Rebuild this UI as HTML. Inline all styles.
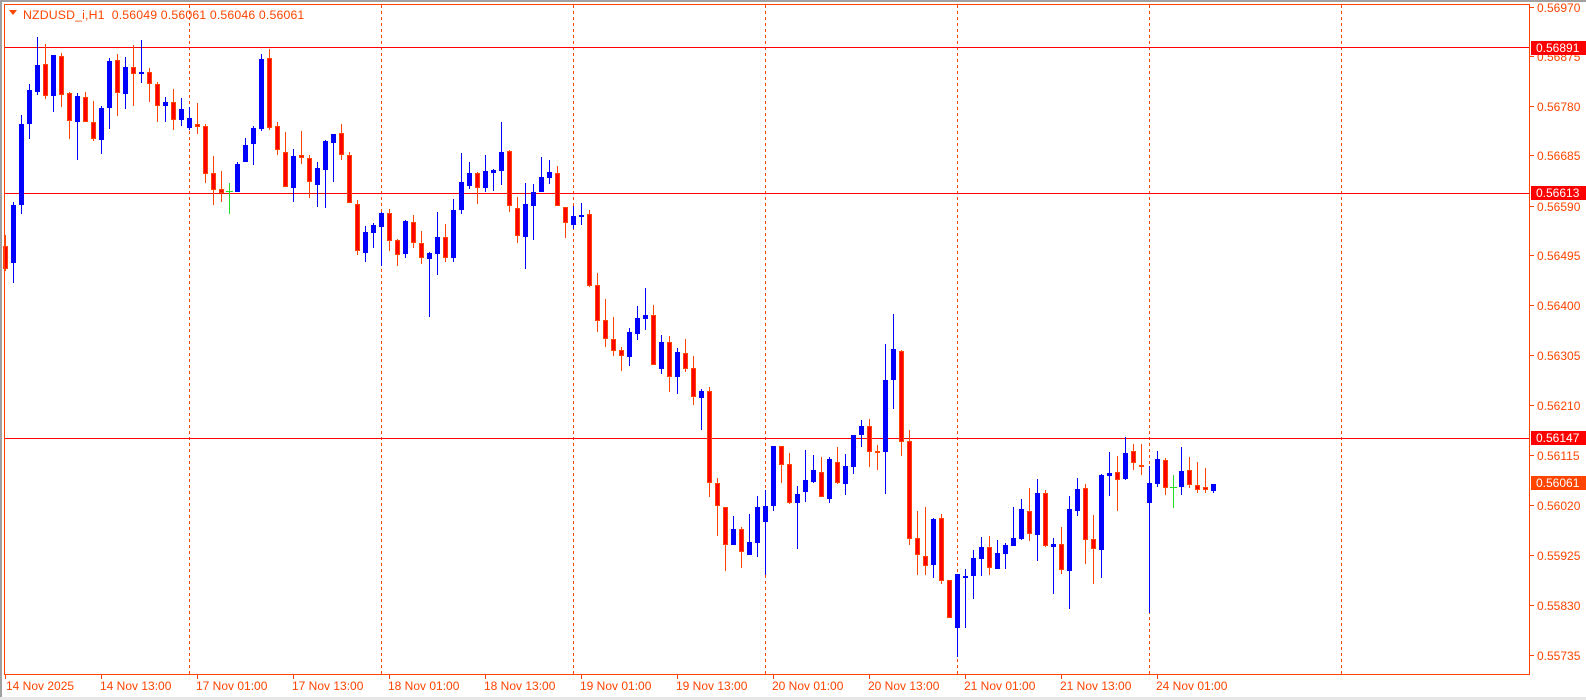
<!DOCTYPE html>
<html><head><meta charset="utf-8"><style>
html,body{margin:0;padding:0;background:#fff;width:1586px;height:700px;overflow:hidden}
svg{display:block}
text{font-family:"Liberation Sans",sans-serif;font-size:12px}
#title{white-space:pre;font-size:12.3px;letter-spacing:0.15px}
</style></head><body>
<svg id="s" width="1586" height="700" xmlns="http://www.w3.org/2000/svg">
<rect x="0" y="0" width="1586" height="700" fill="#fff"/>
<rect x="0" y="0" width="1586" height="2" fill="#a0a0a0"/>
<rect x="0" y="0" width="2" height="700" fill="#a0a0a0"/>
<rect x="0" y="697" width="1586" height="3" fill="#e6e6e6"/>
<g id="grid"></g>
<line x1="4" y1="47.5" x2="1529" y2="47.5" stroke="#ff0000"/>
<line x1="4" y1="193.5" x2="1529" y2="193.5" stroke="#ff0000"/>
<line x1="4" y1="438.5" x2="1529" y2="438.5" stroke="#ff0000"/>
<g id="c"></g>
<rect x="4.5" y="4.5" width="1525" height="670" fill="none" stroke="#ff4500"/>
<g id="ax" fill="#ff4500"></g>
<polygon points="9,10 17,10 13,15" fill="#ff4500"/>
<text id="title" x="23" y="19" fill="#ff4500" xml:space="preserve">NZDUSD_i,H1  0.56049 0.56061 0.56046 0.56061</text>
</svg>
<script>
var NS="http://www.w3.org/2000/svg";
function el(p,t,a,txt){var e=document.createElementNS(NS,t);for(var k in a)e.setAttribute(k,a[k]);if(txt!==undefined)e.textContent=txt;p.appendChild(e);return e;}
var g=document.getElementById('grid');
for(var k=0;k<7;k++){var x=189+192*k+0.5;el(g,'line',{x1:x,y1:5,x2:x,y2:674,stroke:'#ff4500','stroke-dasharray':'3,3'});}
var ax=document.getElementById('ax');
var prices=[["0.56970",7],["0.56875",56],["0.56780",106],["0.56685",155],["0.56590",206],["0.56495",255],["0.56400",305],["0.56305",355],["0.56210",405],["0.56115",455],["0.56020",505],["0.55925",555],["0.55830",605],["0.55735",655]];
prices.forEach(function(p){el(ax,'rect',{x:1530,y:p[1],width:4,height:1});el(ax,'text',{x:1537,y:p[1]+5},p[0]);});
[["0.56891",41,"#ff0000"],["0.56613",186,"#ff0000"],["0.56147",431,"#ff0000"],["0.56061",476,"#ff4500"]].forEach(function(b){
el(ax,'rect',{x:1531,y:b[1],width:55,height:14,fill:b[2]});el(ax,'text',{x:1536,y:b[1]+11,fill:'#fff'},b[0]);});
var dates=["14 Nov 2025","14 Nov 13:00","17 Nov 01:00","17 Nov 13:00","18 Nov 01:00","18 Nov 13:00","19 Nov 01:00","19 Nov 13:00","20 Nov 01:00","20 Nov 13:00","21 Nov 01:00","21 Nov 13:00","24 Nov 01:00"];
dates.forEach(function(d,i){var x=5+96*i;el(ax,'rect',{x:x,y:675,width:1,height:4});el(ax,'text',{x:x+(i==0?1:-1),y:690},d);});
var D=[
[5,'R',246,269,235,271],[13,'B',205,263,202,283],[21,'B',124,205,115,214],[29,'B',90,124,84,139],[37,'B',65,92,37,95],[45,'R',64,96,44,99],[53,'B',55,96,55,112],[61,'R',56,95,53,107],[69,'R',93,121,92,139],[77,'B',96,122,93,160],[85,'R',97,122,92,122],[93,'R',122,139,101,141],[101,'B',108,140,106,154],[109,'B',61,108,58,129],[117,'R',60,93,54,116],[125,'B',67,94,57,109],[133,'R',67,74,45,106],[141,'B',72,74,40,83],[149,'R',72,84,68,102],[157,'R',84,106,82,122],[165,'B',102,106,97,122],[173,'R',102,120,89,130],[181,'B',109,120,98,126],[189,'B',118,128,107,130],[197,'R',124,127,103,134],[205,'R',126,174,124,183],[213,'R',173,190,156,205],[221,'R',189,193,171,202],[229,'G',191,191,183,214],[237,'B',164,192,162,192],[245,'B',145,162,138,162],[253,'B',128,144,126,165],[261,'B',59,129,54,131],[269,'R',58,128,49,130],[277,'R',126,150,122,155],[285,'R',152,187,132,187],[293,'B',156,188,149,202],[301,'R',155,158,131,164],[309,'R',158,182,155,198],[317,'B',168,185,162,207],[325,'B',141,170,140,208],[333,'B',134,143,134,182],[341,'R',133,155,124,160],[349,'R',155,203,152,203],[357,'R',204,251,200,255],[365,'B',232,253,226,262],[373,'B',225,233,223,248],[381,'B',213,227,212,266],[389,'R',213,241,209,251],[397,'R',240,255,239,266],[405,'B',221,254,220,258],[413,'R',222,243,215,248],[421,'R',243,258,231,264],[429,'B',253,259,252,317],[437,'B',237,254,212,275],[445,'R',237,258,224,262],[453,'B',210,258,199,262],[461,'B',182,210,153,214],[469,'B',173,186,162,189],[477,'R',173,188,172,204],[485,'B',171,188,155,192],[493,'B',170,173,169,191],[501,'B',152,171,122,185],[509,'R',151,206,150,212],[517,'R',208,236,197,243],[525,'B',204,237,183,269],[533,'B',192,206,184,240],[541,'B',177,192,157,192],[549,'B',172,178,160,184],[557,'R',173,206,166,206],[565,'R',207,223,207,238],[573,'B',216,225,206,229],[581,'B',215,217,203,225],[589,'R',214,286,210,287],[597,'R',285,321,273,332],[605,'R',320,339,299,347],[613,'R',339,351,317,356],[621,'R',350,356,347,371],[629,'B',332,357,328,366],[637,'B',318,334,306,340],[645,'B',315,319,288,330],[653,'R',315,365,305,365],[661,'B',342,369,335,374],[669,'R',342,377,336,392],[677,'B',352,377,348,394],[685,'R',353,369,339,372],[693,'R',368,397,356,405],[701,'B',391,398,389,430],[709,'R',391,483,387,497],[717,'R',483,506,478,536],[725,'R',507,545,507,571],[733,'B',529,545,516,545],[741,'R',529,552,527,568],[749,'B',542,555,514,555],[757,'B',507,543,496,557],[765,'B',506,522,490,575],[773,'B',446,506,446,511],[781,'R',446,465,446,483],[789,'R',464,503,453,504],[797,'B',494,503,486,549],[805,'B',480,492,450,502],[813,'B',470,482,455,483],[821,'R',472,497,457,497],[829,'B',459,499,457,503],[837,'R',462,483,447,484],[845,'B',466,484,454,495],[853,'B',435,467,435,474],[861,'B',426,435,420,447],[869,'R',426,452,419,467],[877,'R',451,452,445,470],[885,'B',380,452,344,494],[893,'B',349,380,314,409],[901,'R',351,442,350,456],[909,'R',441,539,430,545],[917,'R',538,555,511,575],[925,'R',556,566,507,575],[933,'B',519,565,518,578],[941,'R',518,581,514,584],[949,'R',580,618,580,618],[957,'B',574,628,574,657],[965,'B',576,578,569,628],[973,'B',558,576,550,599],[981,'B',547,559,537,576],[989,'R',547,568,536,575],[997,'B',553,569,540,569],[1005,'B',545,554,543,569],[1013,'B',538,546,507,546],[1021,'B',509,539,499,540],[1029,'R',511,534,488,541],[1037,'B',493,535,479,561],[1045,'R',493,546,490,547],[1053,'B',544,547,538,594],[1061,'R',544,570,527,574],[1069,'B',509,571,496,609],[1077,'B',489,511,478,516],[1085,'R',488,540,484,564],[1093,'R',539,549,515,584],[1101,'B',475,550,474,578],[1109,'B',473,476,452,496],[1117,'R',472,480,456,511],[1125,'B',453,479,437,480],[1133,'R',451,463,444,470],[1141,'R',465,466,444,475],[1149,'B',483,503,466,613],[1157,'B',459,484,451,487],[1165,'R',460,488,458,495],[1173,'G',487,487,475,508],[1181,'B',471,487,447,495],[1189,'R',470,485,457,488],[1197,'R',485,490,462,493],[1205,'R',487,490,468,493],[1213,'B',484,491,484,493]];
var c=document.getElementById('c');
D.forEach(function(d){var x=d[0],t=d[1],bt=d[2],bb=d[3],wt=d[4],wb=d[5];
var col=t=='B'?'#0000ff':(t=='G'?'#22dd22':'#ff4500');
el(c,'rect',{x:x,y:wt,width:1,height:Math.max(1,wb-wt),fill:col});
if(t=='G'){el(c,'rect',{x:x-3,y:bt,width:7,height:1,fill:col});return;}
var h=Math.max(2,bb-bt);
if(t=='B'){el(c,'rect',{x:x-2,y:bt,width:5,height:h,fill:'#0000ff'});}
else{el(c,'rect',{x:x-2,y:bt,width:5,height:h,fill:'#ff4500'});if(h>2)el(c,'rect',{x:x-1,y:bt+1,width:3,height:h-2,fill:'#ff0000'});}
});
</script>
</body></html>
